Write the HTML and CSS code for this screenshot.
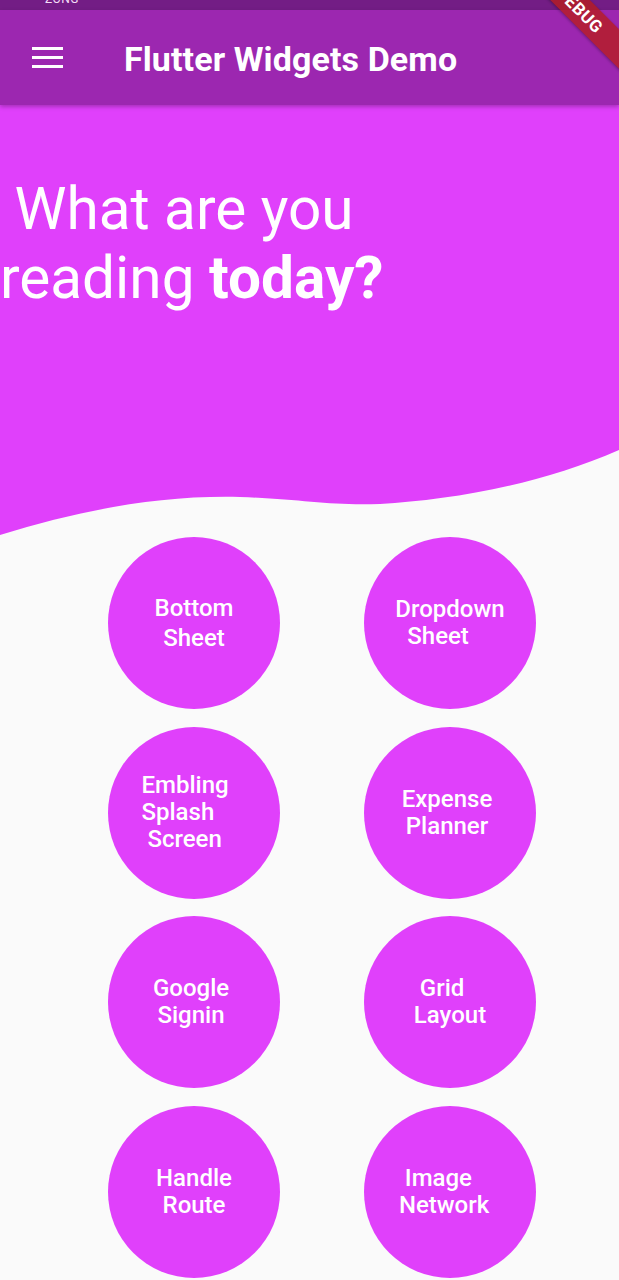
FILE: index.html
```html
<!DOCTYPE html>
<html>
<head>
<meta charset="utf-8">
<link rel="stylesheet" href="styles.css">
</head>
<body>
<div class="screen">
  <div class="status"><span class="carrier">ZONG</span></div>
  <header class="appbar">
    <div class="menu"><span></span><span></span><span></span></div>
    <h1 class="title">Flutter Widgets Demo</h1>
  </header>
  <section class="hero">
    <svg class="wave" viewBox="0 0 619 430" preserveAspectRatio="none">
      <path d="M0 430 C 80 405, 160 390, 240 392 C 300 394, 330 401, 380 399 C 450 395, 540 380, 619 345 V0 H0 Z" fill="#e040fb"/>
    </svg>
    <p class="headline"> What are you
reading <b>today?</b></p>
  </section>
  <main class="grid">
    <div class="circle"><div class="label center bottom">Bottom
Sheet</div></div>
    <div class="circle"><div class="label">Dropdown
  Sheet</div></div>
    <div class="circle"><div class="label">Embling   
Splash
 Screen</div></div>
    <div class="circle"><div class="label center">Expense 
Planner </div></div>
    <div class="circle"><div class="label center">Google 
Signin </div></div>
    <div class="circle"><div class="label"> Grid
Layout</div></div>
    <div class="circle"><div class="label center">Handle
Route</div></div>
    <div class="circle"><div class="label"> Image
Network  </div></div>
  </main>
  <div class="debug"><span>DEBUG</span></div>
</div>
</body>
</html>
```
FILE: styles.css
```css
* { box-sizing: border-box; }
html, body { margin: 0; padding: 0; }
body {
  background: #fafafa;
  font-family: Roboto, "Noto Sans", sans-serif;
}
.screen {
  position: relative;
  width: 619px;
  height: 1280px;
  overflow: hidden;
  background: #fafafa;
}
.status {
  height: 10px;
  background: #731d85;
  overflow: hidden;
  padding-left: 45px;
}
.carrier {
  display: block;
  color: #f3dff7;
  font-size: 12px;
  line-height: 12px;
  margin-top: -7px;
  letter-spacing: 0.5px;
}
.appbar {
  position: relative;
  z-index: 2;
  height: 95px;
  background: #9c27b0;
  display: flex;
  align-items: center;
  padding-left: 32px;
  box-shadow: 0 2px 4px rgba(0,0,0,0.25);
}
.menu {
  width: 31px;
  height: 21px;
  display: flex;
  flex-direction: column;
  justify-content: space-between;
}
.menu span {
  display: block;
  height: 3px;
  background: #fff;
}
.title {
  margin: 2px 0 0 61px;
  color: #fff;
  font-size: 34px;
  font-weight: 700;
  letter-spacing: 0.1px;
}
.hero {
  position: relative;
  height: 430px;
}
.wave {
  position: absolute;
  left: 0;
  top: 0;
  width: 619px;
  height: 430px;
  display: block;
}
.headline {
  position: relative;
  margin: 0;
  padding-top: 70px;
  white-space: pre;
  text-align: left;
  color: #fff;
  font-size: 58.5px;
  line-height: 69px;
  font-weight: 400;
}
.headline b { font-weight: 700; }
.grid {
  display: grid;
  grid-template-columns: 172px 172px;
  grid-auto-rows: 172px;
  column-gap: 84px;
  row-gap: 17.5px;
  padding: 2px 0 0 108px;
}
.circle {
  width: 172px;
  height: 172px;
  border-radius: 50%;
  background: #e040fb;
  display: flex;
  align-items: center;
  justify-content: center;
}
.label {
  color: #fff;
  font-size: 24px;
  font-weight: 500;
  line-height: 27px;
  white-space: pre;
  text-align: left;
}
.label.center { text-align: center; }
.label.bottom { line-height: 30px; }
.debug {
  position: absolute;
  left: 480px;
  top: -4px;
  width: 200px;
  height: 28px;
  transform: rotate(45deg);
  background: rgba(183, 28, 28, 0.78);
  box-shadow: 0 1px 3px rgba(0,0,0,0.3);
  display: flex;
  align-items: center;
  justify-content: center;
  z-index: 5;
}
.debug span {
  color: #fff;
  font-size: 17px;
  font-weight: 700;
  letter-spacing: 0.5px;
}
```
